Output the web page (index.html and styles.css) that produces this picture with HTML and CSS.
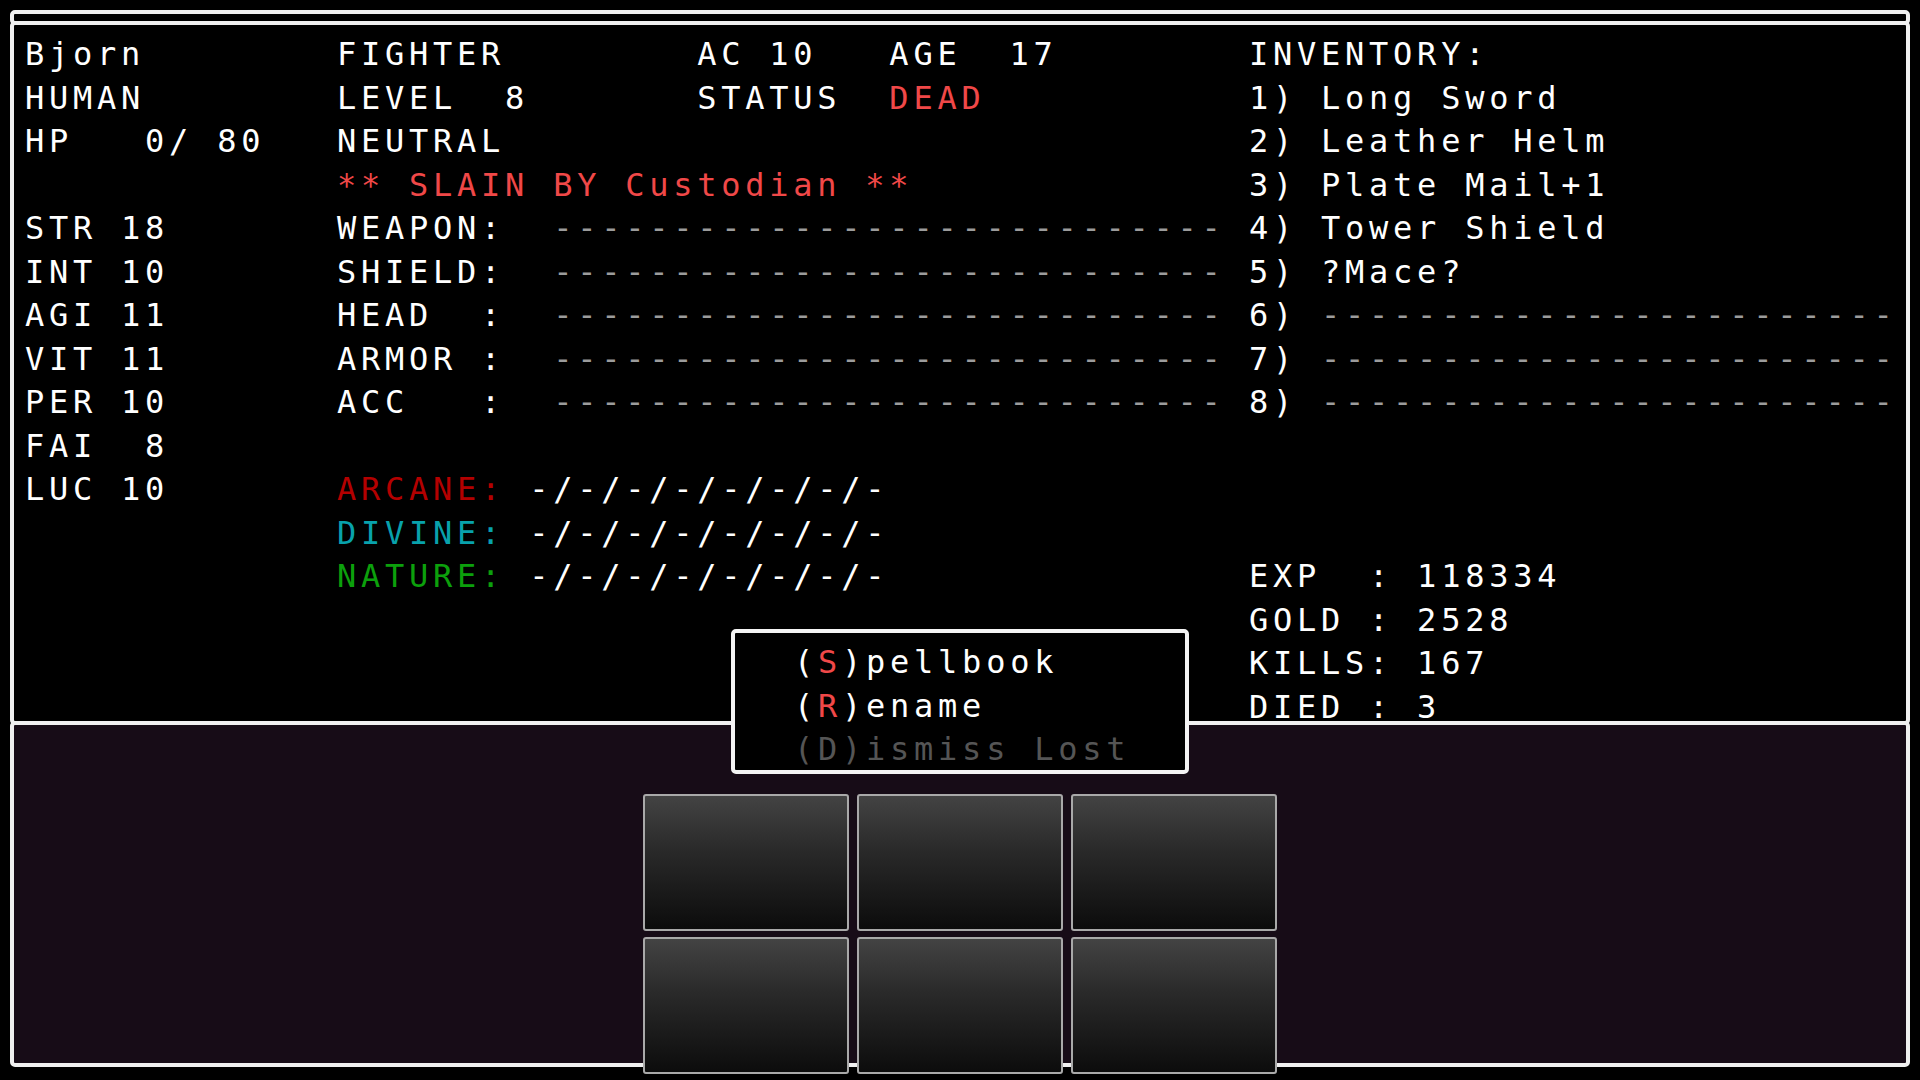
FILE: index.html
```html
<!DOCTYPE html>
<html lang="en">
<head>
    <title>Character</title>
    <link rel="stylesheet" href="styles.css">
</head>
<body>
<div class="screen">
    <div class="bar"></div>
    <div class="panel main">
        <div class="col stats">
            <div class="row">Bjorn</div>
            <div class="row">HUMAN</div>
            <div class="row">HP   0/ 80</div>
            <div class="row"></div>
            <div class="row">STR 18</div>
            <div class="row">INT 10</div>
            <div class="row">AGI 11</div>
            <div class="row">VIT 11</div>
            <div class="row">PER 10</div>
            <div class="row">FAI  8</div>
            <div class="row">LUC 10</div>
        </div>
        <div class="col gear">
            <div class="row">FIGHTER        AC 10   AGE  17</div>
            <div class="row">LEVEL  8       STATUS  <span class="red">DEAD</span></div>
            <div class="row">NEUTRAL</div>
            <div class="row red">** SLAIN BY Custodian **</div>
            <div class="row">WEAPON:  <span class="empty">----------------------------</span></div>
            <div class="row">SHIELD:  <span class="empty">----------------------------</span></div>
            <div class="row">HEAD  :  <span class="empty">----------------------------</span></div>
            <div class="row">ARMOR :  <span class="empty">----------------------------</span></div>
            <div class="row">ACC   :  <span class="empty">----------------------------</span></div>
            <div class="row"></div>
            <div class="row"><span class="arcane">ARCANE:</span> -/-/-/-/-/-/-/-</div>
            <div class="row"><span class="divine">DIVINE:</span> -/-/-/-/-/-/-/-</div>
            <div class="row"><span class="nature">NATURE:</span> -/-/-/-/-/-/-/-</div>
        </div>
        <div class="col inventory">
            <div class="row">INVENTORY:</div>
            <div class="row">1) Long Sword</div>
            <div class="row">2) Leather Helm</div>
            <div class="row">3) Plate Mail+1</div>
            <div class="row">4) Tower Shield</div>
            <div class="row">5) ?Mace?</div>
            <div class="row">6) <span class="empty">------------------------</span></div>
            <div class="row">7) <span class="empty">------------------------</span></div>
            <div class="row">8) <span class="empty">------------------------</span></div>
            <div class="row"></div>
            <div class="row"></div>
            <div class="row"></div>
            <div class="row">EXP  : 118334</div>
            <div class="row">GOLD : 2528</div>
            <div class="row">KILLS: 167</div>
            <div class="row">DIED : 3</div>
        </div>
    </div>
    <div class="panel lower">
        <div class="slots">
            <div class="slot"></div>
            <div class="slot"></div>
            <div class="slot"></div>
            <div class="slot"></div>
            <div class="slot"></div>
            <div class="slot"></div>
        </div>
    </div>
    <div class="menu">
        <div class="row">(<span class="red">S</span>)pellbook</div>
        <div class="row">(<span class="red">R</span>)ename</div>
        <div class="row off">(D)ismiss Lost</div>
    </div>
</div>
</body>
</html>
```

FILE: styles.css
```css
html {
    overflow: hidden;
}

body {
    margin: 0;
    background: #000;
    color: #fff;
    font-family: "DejaVu Sans Mono", "Liberation Mono", monospace;
    font-size: 32px;
    letter-spacing: 4.75px;
}

.screen {
    position: relative;
    width: 1900px;
    height: 1060px;
    padding: 10px;
}

.bar {
    height: 7px;
    border: 4px solid #f0f0f0;
    border-radius: 5px;
    background: #000;
}

.panel {
    margin-top: -4px;
    border: 4px solid #f0f0f0;
    border-radius: 5px;
}

.main {
    display: flex;
    height: 688px;
    padding: 8px 0 0 11px;
    box-sizing: content-box;
    background: #000;
}

.row {
    height: 43.5px;
    line-height: 43.5px;
    white-space: pre;
}

.stats {
    width: 312px;
}

.gear {
    width: 912px;
}

.red {
    color: #f04848;
}

.empty {
    color: #9c9c9c;
}

.arcane {
    color: #b40000;
}

.divine {
    color: #08a2ac;
}

.nature {
    color: #0ca00c;
}

.lower {
    height: 338px;
    background: #170c17;
    display: flex;
    justify-content: center;
}

.slots {
    display: grid;
    grid-template-columns: repeat(3, 206px);
    grid-template-rows: 137px 137px;
    column-gap: 8px;
    row-gap: 6px;
    margin-top: 69px;
    height: 280px;
}

.slot {
    box-sizing: border-box;
    border: 2px solid #a9a9a9;
    border-radius: 3px;
    background: linear-gradient(#434343, #2a2a2a 40%, #0c0c0c);
}

.menu {
    position: absolute;
    left: 731px;
    top: 629px;
    width: 391px;
    height: 129px;
    padding: 8px 0 0 59px;
    border: 4px solid #f4f4f4;
    border-radius: 5px;
    background: #000;
    z-index: 2;
}

.menu .off {
    color: #555;
}
```
